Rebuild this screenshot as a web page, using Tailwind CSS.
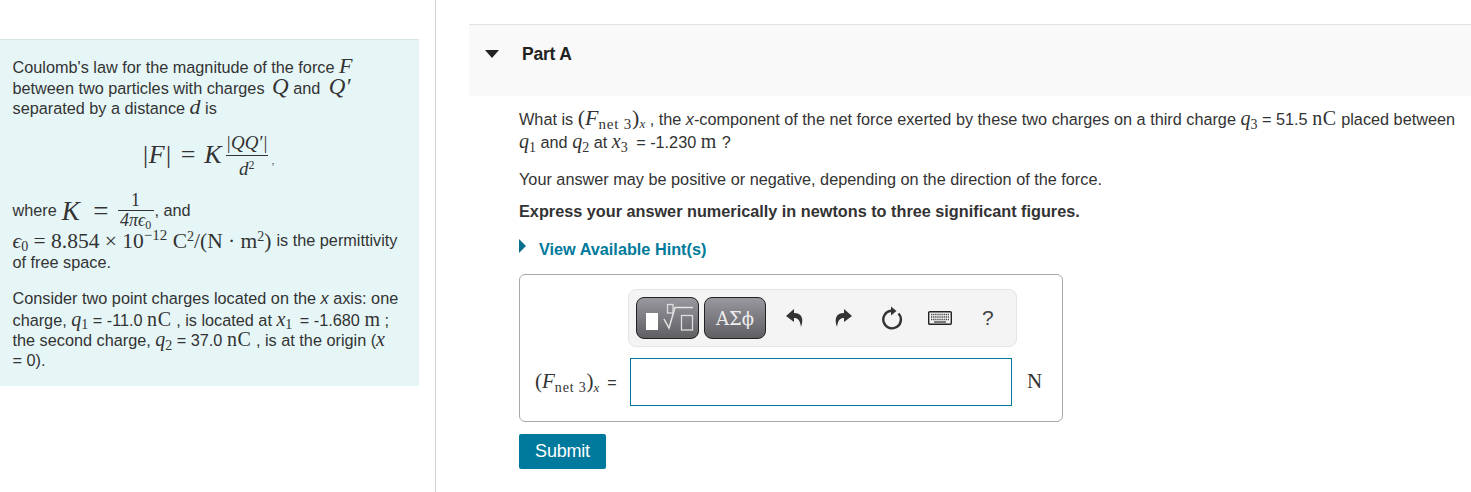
<!DOCTYPE html>
<html>
<head>
<meta charset="utf-8">
<script src="https://cdn.jsdelivr.net/npm/@tailwindcss/browser@4"></script>
</head>
<body class="bg-white">
<div class="flex h-[492px] w-[1471px] overflow-hidden font-['Liberation_Sans',sans-serif] text-[16.25px] text-[#333]">
  <aside class="w-[436px] shrink-0 border-r border-[#cdd5da] pt-[39px]">
    <div class="w-[419px] h-[347px] border-t border-[#d9e5e7] bg-[#e6f6f7] pl-[12.5px] pt-[16px] leading-[20.5px] whitespace-nowrap">
      <div class="h-[20.5px]">Coulomb's law for the magnitude of the force <span class="font-['Liberation_Serif',serif] italic text-[22px] leading-[20px]">F</span></div>
      <div class="h-[20.5px]">between two particles with charges <span class="font-['Liberation_Serif',serif] italic text-[23px] leading-[20px] ml-[3px]">Q</span> and <span class="font-['Liberation_Serif',serif] italic text-[23px] leading-[20px] ml-[4px]">Q′</span></div>
      <div class="h-[20.5px]">separated by a distance <span class="font-['Liberation_Serif',serif] italic text-[22px] leading-[20px]">d</span> is</div>
      <div class="flex items-center h-[58px] mt-[9px] pl-[129px] font-['Liberation_Serif',serif] text-[26px]">
        <i>|F|</i>
        <span class="ml-[9px]">=</span>
        <i class="ml-[9px]">K</i>
        <span class="inline-flex flex-col items-center text-[19px] leading-[25px] ml-[4px] w-[42px]">
          <span class="border-b border-[#333] w-full text-center"><i>|QQ′|</i></span>
          <span class="leading-[25px]"><i>d</i><sup class="text-[12px]">2</sup></span>
        </span>
        <span class="text-[10px] ml-[4px] mt-[12px]">,</span>
      </div>
      <div class="flex items-center h-[36px] mt-[8px]">
        <span>where</span>
        <span class="font-['Liberation_Serif',serif] text-[27px] leading-[30px] ml-[5px] whitespace-pre"><i>K</i>  =</span>
        <span class="inline-flex flex-col items-center font-['Liberation_Serif',serif] text-[18px] leading-[19px] w-[36px] ml-[9px]">
          <span class="border-b border-[#333] w-full text-center">1</span>
          <span class="italic">4πϵ<sub class="not-italic text-[12px]">0</sub></span>
        </span>
        <span class="ml-[1px]">, and</span>
      </div>
      <div class="flex items-center h-[24px]">
        <span class="font-['Liberation_Serif',serif] text-[21.5px] leading-[24px]"><i>ϵ</i><sub class="text-[14px]">0</sub> = 8.854 × 10<sup class="text-[15px]">−12</sup> C<sup class="text-[14px]">2</sup>/(N · m<sup class="text-[14px]">2</sup>)</span>
        <span class="ml-[5px]">is the permittivity</span>
      </div>
      <div class="h-[20.5px] -mt-px">of free space.</div>
      <div class="h-[20.5px] mt-[16px]">Consider two point charges located on the <i>x</i> axis: one</div>
      <div class="h-[20.5px]">charge, <span class="font-['Liberation_Serif',serif] text-[20px] leading-[20px]"><i>q</i><sub class="text-[14px]">1</sub></span> = -11.0 <span class="font-['Liberation_Serif',serif] text-[20px] leading-[20px] tracking-[0.6px]">nC</span> , is located at <span class="font-['Liberation_Serif',serif] text-[20px] leading-[20px] mr-[3px]"><i>x</i><sub class="text-[14px]">1</sub></span> = -1.680 <span class="font-['Liberation_Serif',serif] text-[20px] leading-[20px]">m</span> ;</div>
      <div class="h-[20.5px]">the second charge, <span class="font-['Liberation_Serif',serif] text-[20px] leading-[20px]"><i>q</i><sub class="text-[14px]">2</sub></span> = 37.0 <span class="font-['Liberation_Serif',serif] text-[20px] leading-[20px] tracking-[0.6px]">nC</span> , is at the origin (<span class="font-['Liberation_Serif',serif] text-[20px] leading-[20px] italic">x</span></div>
      <div class="h-[20.5px]">= 0).</div>
    </div>
  </aside>
  <main class="flex-1 pl-[33px] pt-[24px]">
    <div class="flex h-[72px] border-t border-[#e2e2e2] bg-[#f9f9f9] pl-[16px] pt-[18px]">
      <svg class="mt-[7px]" width="14" height="8" viewBox="0 0 14 8"><path d="M0 0H14L7 8Z" fill="#222"/></svg>
      <span class="ml-[23px] font-bold text-[17.5px] leading-[22px] tracking-[-0.2px] text-[#222]">Part A</span>
    </div>
    <div class="pl-[50px] whitespace-nowrap">
      <div class="h-[22px] mt-[12px] leading-[22px]">What is <span class="font-['Liberation_Serif',serif] text-[22px] leading-[20px]">(<i>F</i><sub class="text-[15px] tracking-[0.8px]">net 3</sub>)<sub class="text-[13px] italic">x</sub></span> , the <i>x</i>-component of the net force exerted by these two charges on a third charge <span class="font-['Liberation_Serif',serif] text-[20px] leading-[20px]"><i>q</i><sub class="text-[14px]">3</sub></span> = 51.5 <span class="font-['Liberation_Serif',serif] text-[20px] leading-[20px] tracking-[0.6px]">nC</span> placed between</div>
      <div class="h-[22px] leading-[22px] mt-px"><span class="font-['Liberation_Serif',serif] text-[20px] leading-[20px]"><i>q</i><sub class="text-[14px]">1</sub></span> and <span class="font-['Liberation_Serif',serif] text-[20px] leading-[20px]"><i>q</i><sub class="text-[14px]">2</sub></span> at <span class="font-['Liberation_Serif',serif] text-[20px] leading-[20px] mr-[4px]"><i>x</i><sub class="text-[14px]">3</sub></span> = -1.230 <span class="font-['Liberation_Serif',serif] text-[20px] leading-[20px] tracking-[1px]">m</span> ?</div>
      <div class="h-[20px] leading-[20px] mt-[16px]">Your answer may be positive or negative, depending on the direction of the force.</div>
      <div class="h-[20px] leading-[20px] mt-[12px] font-bold">Express your answer numerically in newtons to three significant figures.</div>
      <div class="flex items-center h-[20px] mt-[18px] font-bold text-[#007a9c]">
        <svg class="mb-[6px]" width="7" height="14" viewBox="0 0 7 14"><path d="M0 0L7 7L0 14Z" fill="#0a6f8e"/></svg>
        <span class="ml-[13px]">View Available Hint(s)</span>
      </div>
      <section class="w-[544px] h-[148px] mt-[15px] rounded-md border border-[#aaa] pt-[14px]">
        <div class="flex items-center gap-[5px] ml-[108px] w-[389px] h-[58px] rounded-lg border border-[#e4e4e4] bg-[#f4f4f4] pl-[7px]">
          <div class="w-[63px] h-[42px] rounded-lg border border-[#222] bg-linear-to-b from-[#98989e] to-[#5f5f64]">
            <svg width="61" height="40" viewBox="0 0 61 40"><rect x="9" y="15" width="12" height="17" fill="#fff"/><rect x="30.5" y="6.5" width="5.5" height="8.5" fill="none" stroke="#ddd" stroke-width="1.3"/><path d="M27 21L32 30L38 9.5H56" fill="none" stroke="#e4e4e4" stroke-width="1.5"/><rect x="44.5" y="17.5" width="11" height="14.5" fill="none" stroke="#ddd" stroke-width="1.3"/></svg>
          </div>
          <div class="flex items-center justify-center w-[62px] h-[42px] rounded-lg border border-[#222] bg-linear-to-b from-[#98989e] to-[#5f5f64] font-['DejaVu_Serif',serif] text-[18px] text-[#eee]">ΑΣϕ</div>
          <div class="flex items-center ml-[15px]">
            <svg width="18" height="20" viewBox="0 0 18 20"><path d="M8 1L0 8L8 14V10C12 10 14 12 15 19C18 11 16 5 8 5Z" fill="#333"/></svg>
            <svg class="ml-[30px]" width="18" height="20" viewBox="0 0 18 20"><path d="M10 1L18 8L10 14V10C6 10 4 12 3 19C0 11 2 5 10 5Z" fill="#333"/></svg>
            <svg class="ml-[29px]" width="22" height="24" viewBox="0 0 22 24"><path d="M17.5 7.5A8.8 8.8 0 1 1 10 4.8" fill="none" stroke="#333" stroke-width="2.4"/><path d="M10 0.5L15.5 5L10 9.5Z" fill="#333"/></svg>
            <svg class="ml-[25px]" width="24" height="14" viewBox="0 0 24 14"><rect x="0.7" y="0.7" width="22.6" height="12.6" rx="1" fill="#f4f4f4" stroke="#222" stroke-width="1.4"/><path d="M3 3.5H21M3 6H21M3 8.5H21" stroke="#444" stroke-width="1.4" stroke-dasharray="1.3 0.8"/><path d="M6 11H18" stroke="#444" stroke-width="1.4"/></svg>
            <span class="ml-[30px] text-[21px] leading-[20px] text-[#444]">?</span>
          </div>
        </div>
        <div class="flex items-center mt-[11px]">
          <span class="ml-[15px] w-[95px] font-['Liberation_Serif',serif] text-[21px]">(<i>F</i><sub class="text-[14px] tracking-[0.8px]">net 3</sub>)<sub class="text-[13px] italic">x</sub><span class="font-['Liberation_Sans',sans-serif] text-[16px] ml-[8px]">=</span></span>
          <div class="w-[382px] h-[48px] border border-[#007a9c] bg-white"></div>
          <span class="ml-[15px] font-['Liberation_Serif',serif] text-[21px]">N</span>
        </div>
      </section>
      <button class="block mt-[12px] w-[87px] h-[35px] rounded-[2px] bg-[#007a9c] text-center text-[18px] tracking-[-0.2px] text-white">Submit</button>
    </div>
  </main>
</div>
</body>
</html>
